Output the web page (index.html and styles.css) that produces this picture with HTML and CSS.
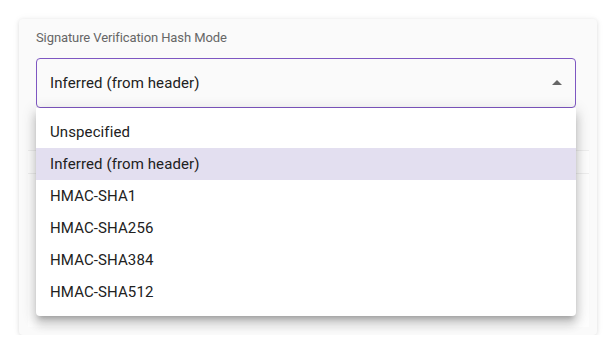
FILE: index.html
```html
<!DOCTYPE html>
<html lang="en">
<head>
  <meta charset="UTF-8">
  <meta name="viewport" content="width=device-width, initial-scale=1.0">
  <title>Hash Mode</title>
  <link rel="stylesheet" href="styles.css">
</head>
<body>
  <div class="card">
    <label class="field-label">Signature Verification Hash Mode</label>
    <div class="select-wrap">
      <div class="select-box">
        <span class="select-value">Inferred (from header)</span>
        <span class="select-arrow"></span>
      </div>
      <ul class="menu">
        <li class="menu-item">Unspecified</li>
        <li class="menu-item selected">Inferred (from header)</li>
        <li class="menu-item">HMAC-SHA1</li>
        <li class="menu-item">HMAC-SHA256</li>
        <li class="menu-item">HMAC-SHA384</li>
        <li class="menu-item">HMAC-SHA512</li>
      </ul>
    </div>
    <div class="under-panel">
      <div class="under-row"></div>
      <div class="under-row"></div>
    </div>
  </div>
</body>
</html>
```

FILE: styles.css
```css
body {
  margin: 0;
  padding: 19px 19px 0 19px;
  background: #fff;
  font-family: Roboto, 'Noto Sans', sans-serif;
}

.card {
  width: 578px;
  height: 316px;
  box-sizing: border-box;
  background-color: #fafafa;
  border-radius: 4px;
  box-shadow: 0 1px 4px rgba(0, 0, 0, 0.12), 0 0 10px rgba(0, 0, 0, 0.04);
  padding: 11px 21px 8px 17px;
  position: relative;
}

.field-label {
  display: block;
  font-size: 13px;
  color: #666;
  line-height: 16px;
  height: 28px;
  letter-spacing: -0.1px;
}

.select-wrap {
  position: relative;
  z-index: 2;
}

.select-box {
  height: 50px;
  box-sizing: border-box;
  border: 1px solid #7e57c2;
  border-radius: 4px;
  display: flex;
  align-items: center;
  justify-content: space-between;
  padding: 0 13px 0 13px;
}

.select-value {
  font-size: 15px;
  color: #212121;
  letter-spacing: 0.1px;
}

.select-arrow {
  width: 0;
  height: 0;
  border-left: 5px solid transparent;
  border-right: 5px solid transparent;
  border-bottom: 5px solid #666;
  margin-bottom: 1px;
}

.menu {
  position: absolute;
  top: 50px;
  left: 0;
  right: 0;
  margin: 0;
  padding: 8px 0;
  list-style: none;
  background: #fff;
  border-radius: 0 0 4px 4px;
  box-shadow: 0 5px 5px -3px rgba(0, 0, 0, 0.2), 0 8px 10px 1px rgba(0, 0, 0, 0.14), 0 3px 14px 2px rgba(0, 0, 0, 0.12);
}

.menu-item {
  height: 32px;
  line-height: 32px;
  padding: 0 14px;
  font-size: 15px;
  color: #212121;
  letter-spacing: 0.1px;
}

.menu-item.selected {
  background-color: #e3dff0;
}

.under-panel {
  margin: 42px -13px 0 -8px;
  height: 177px;
  background: #fdfdfd;
}

.under-row {
  height: 22px;
  border-top: 1px solid #eee;
}
```
